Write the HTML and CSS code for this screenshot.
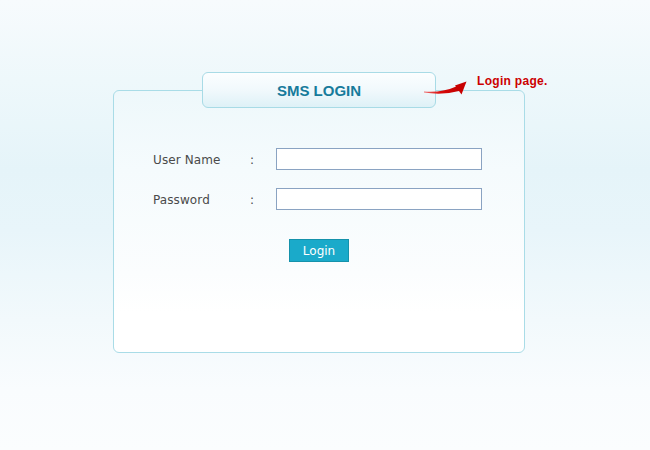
FILE: index.html
```html
<!DOCTYPE html>
<html>
<head>
<meta charset="utf-8">
<title>SMS LOGIN</title>
<link rel="stylesheet" href="styles.css">
</head>
<body>
<div class="page">
  <div class="panel">
    <div class="head">
      <div class="tab">SMS LOGIN</div>
      <svg class="arrow" width="48" height="17" viewBox="0 0 48 17">
        <defs>
          <linearGradient id="ag" x1="0" y1="0" x2="1" y2="0">
            <stop offset="0" stop-color="#f07070"/>
            <stop offset="0.45" stop-color="#d80808"/>
            <stop offset="1" stop-color="#c00000"/>
          </linearGradient>
        </defs>
        <path d="M1,12.5 Q19,14 34.5,7 L38.5,11.5 Q20,16.5 1,13.5 Z" fill="url(#ag)"/>
        <path d="M43.5,2.5 L32,6.5 L38.5,15.5 Z" fill="#c80000"/>
      </svg>
      <span class="note">Login page.</span>
    </div>
    <div class="box">
      <div class="form">
        <label class="lbl">User Name</label><span class="colon">:</span><input class="field" type="text">
        <label class="lbl">Password</label><span class="colon">:</span><input class="field" type="password">
      </div>
      <button class="btn">Login</button>
    </div>
  </div>
</div>
</body>
</html>
```
FILE: styles.css
```css
html, body {
  margin: 0;
  padding: 0;
  height: 100%;
}
body {
  background: linear-gradient(to bottom, #f7fbfd 0px, #eef8fb 80px, #e5f4f9 170px, #e8f5fa 230px, #f2f9fc 320px, #f9fcfe 390px, #fbfdfe 450px);
  font-family: "DejaVu Sans", Verdana, sans-serif;
}
.page {
  padding-top: 72px;
  padding-left: 113px;
}
.panel {
  width: 412px;
}
.head {
  display: flex;
  align-items: flex-start;
  padding-left: 89px;
  height: 36px;
  position: relative;
  z-index: 2;
}
.tab {
  flex: 0 0 auto;
  box-sizing: border-box;
  width: 234px;
  height: 36px;
  border: 1px solid #a8dbe6;
  border-radius: 6px;
  background: linear-gradient(to bottom, #fbfeff 0%, #f1f9fc 50%, #def1f7 100%);
  color: #177b9b;
  font-family: "Liberation Sans", Arial, sans-serif;
  font-weight: bold;
  font-size: 15px;
  display: flex;
  align-items: center;
  justify-content: center;
  padding-top: 1px;
}
.arrow {
  flex: 0 0 auto;
  display: block;
  margin-top: 7px;
  margin-left: -13px;
}
.note {
  flex: 0 0 auto;
  white-space: nowrap;
  margin-left: 6px;
  margin-top: 2px;
  color: #cc0000;
  font-family: "Liberation Sans", Arial, sans-serif;
  font-weight: bold;
  font-size: 12px;
  letter-spacing: 0.3px;
}
.box {
  box-sizing: border-box;
  margin-top: -18px;
  height: 263px;
  border: 1px solid #a9dce7;
  border-radius: 6px;
  background: linear-gradient(to bottom, #eef8fb 0%, #f5fbfd 30%, #fbfdfe 70%, #ffffff 85%, #ffffff 100%);
  padding-top: 57px;
  padding-left: 39px;
}
.form {
  display: grid;
  grid-template-columns: 97px 26px 206px;
  grid-auto-rows: 22px;
  row-gap: 18px;
  align-items: center;
}
.lbl {
  font-size: 12px;
  color: #4a4a4a;
  letter-spacing: 0.1px;
  padding-top: 1px;
}
.colon {
  font-size: 12px;
  color: #4a4a4a;
  padding-top: 1px;
}
.field {
  box-sizing: border-box;
  width: 206px;
  height: 22px;
  margin: 0;
  border: 1px solid #8aa3c2;
  background: #fff;
  padding: 0 3px;
}
.btn {
  display: block;
  box-sizing: border-box;
  margin: 29px 0 0 136px;
  width: 60px;
  height: 23px;
  background: #1aaaca;
  border: 1px solid #1592ab;
  color: #fff;
  font-family: "DejaVu Sans", Verdana, sans-serif;
  font-size: 12px;
  padding: 1px 0 0;
  border-radius: 0;
}
```
